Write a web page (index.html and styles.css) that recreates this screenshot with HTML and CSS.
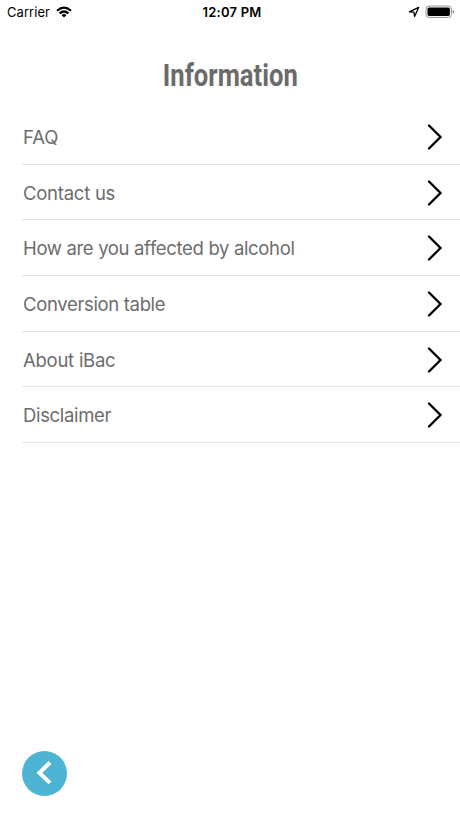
FILE: index.html
```html
<!DOCTYPE html>
<html lang="en">
<head>
<meta charset="utf-8">
<title>Information</title>
<link rel="stylesheet" href="styles.css">
</head>
<body>
<div class="screen">
  <header class="status">
    <div class="carrier"><span class="carrier-name">Carrier</span>
      <svg class="wifi" viewBox="0 0 16 12" width="16" height="12"><g fill="none" stroke="#000" stroke-width="2.2"><path d="M1 4.7Q8-1.6 15 4.7"/><path d="M3.6 7.4Q8 3.6 12.4 7.4"/></g><path d="M5.5 9Q8 7 10.5 9L8 11.6Z"/></svg>
    </div>
    <div class="time"><span class="time-text">12:07 PM</span></div>
    <div class="indicators">
      <svg class="location" viewBox="0 0 12 12" width="12" height="12"><path d="M1.4 5.8 10.6 1.4 6.6 10.5 5.9 6.2Z" fill="none" stroke="#000" stroke-width="1.3" stroke-linejoin="round"/></svg>
      <svg class="battery" viewBox="0 0 30 14" width="30" height="14"><rect x="1" y="1" width="25.4" height="11.4" rx="3" fill="none" stroke="#929292"/><rect x="2.5" y="2.5" width="22.4" height="8.4" rx="1.6"/><path d="M27.7 4.7Q29.4 5.3 29.4 6.7T27.7 8.7Z" fill="#999"/></svg>
    </div>
  </header>
  <h1 class="title"><span class="title-text">Information</span></h1>
  <ul class="menu">
    <li class="row"><span class="label faq">FAQ</span><svg class="chevron" viewBox="0 0 16 26"><path d="M2 1.5 13.5 13 2 24.5"/></svg></li>
    <li class="row"><span class="label contact">Contact us</span><svg class="chevron" viewBox="0 0 16 26"><path d="M2 1.5 13.5 13 2 24.5"/></svg></li>
    <li class="row"><span class="label affected">How are you affected by alcohol</span><svg class="chevron" viewBox="0 0 16 26"><path d="M2 1.5 13.5 13 2 24.5"/></svg></li>
    <li class="row"><span class="label conversion">Conversion table</span><svg class="chevron" viewBox="0 0 16 26"><path d="M2 1.5 13.5 13 2 24.5"/></svg></li>
    <li class="row"><span class="label about">About iBac</span><svg class="chevron" viewBox="0 0 16 26"><path d="M2 1.5 13.5 13 2 24.5"/></svg></li>
    <li class="row"><span class="label disclaimer">Disclaimer</span><svg class="chevron" viewBox="0 0 16 26"><path d="M2 1.5 13.5 13 2 24.5"/></svg></li>
  </ul>
  <footer class="footer">
    <button class="back" aria-label="Back"><svg viewBox="0 0 45 45" width="45" height="45"><path d="M28 11.5 17.4 21.7 28 31.9" fill="none" stroke="#fff" stroke-width="4"/></svg></button>
  </footer>
</div>
</body>
</html>
```
FILE: styles.css
```css
* { box-sizing: border-box; }
body { margin: 0; background: #fff; font-family: Inter, sans-serif; }
.screen { height: 818px; display: flex; flex-direction: column; overflow: hidden; }
.status { height: 24px; display: grid; grid-template-columns: 1fr auto 1fr; padding: 0 5px 0 7px; font-size: 13px; color: #000; }
.carrier, .indicators { display: flex; align-items: center; }
.carrier { gap: 6px; }
.carrier-name { letter-spacing: 0.05px; }
.time { display: flex; align-items: center; font-weight: 600; padding-left: 2px; }
.time-text { letter-spacing: 0.25px; }
.indicators { justify-content: flex-end; gap: 5px; }
.title { margin: 0; height: 85px; display: flex; justify-content: center; padding-top: 32px; font: 700 32px/38px Roboto, sans-serif; color: #6b6b6b; }
.title-text { display: block; transform: scaleX(0.8); white-space: nowrap; }
.menu { list-style: none; margin: 0 0 0 22px; padding: 0; }
.row { height: 55.65px; display: flex; align-items: center; justify-content: space-between; padding: 1.6px 17px 0 0; border-bottom: 1px solid #e4e4e4; }
.label { font-size: 18.5px; color: #6c6c6c; padding-left: 1px; white-space: nowrap; letter-spacing: -0.34px; }
.faq { letter-spacing: -0.1px; }
.contact, .about { letter-spacing: -0.25px; }
.chevron { width: 16px; height: 26px; fill: none; stroke: #000; stroke-width: 2.3; stroke-linecap: round; }
.footer { margin-top: auto; padding: 0 0 22px 22px; }
.back { display: block; width: 45px; height: 45px; padding: 0; border: 0; border-radius: 50%; background: #4db5d3; }
.back svg { display: block; }
```
